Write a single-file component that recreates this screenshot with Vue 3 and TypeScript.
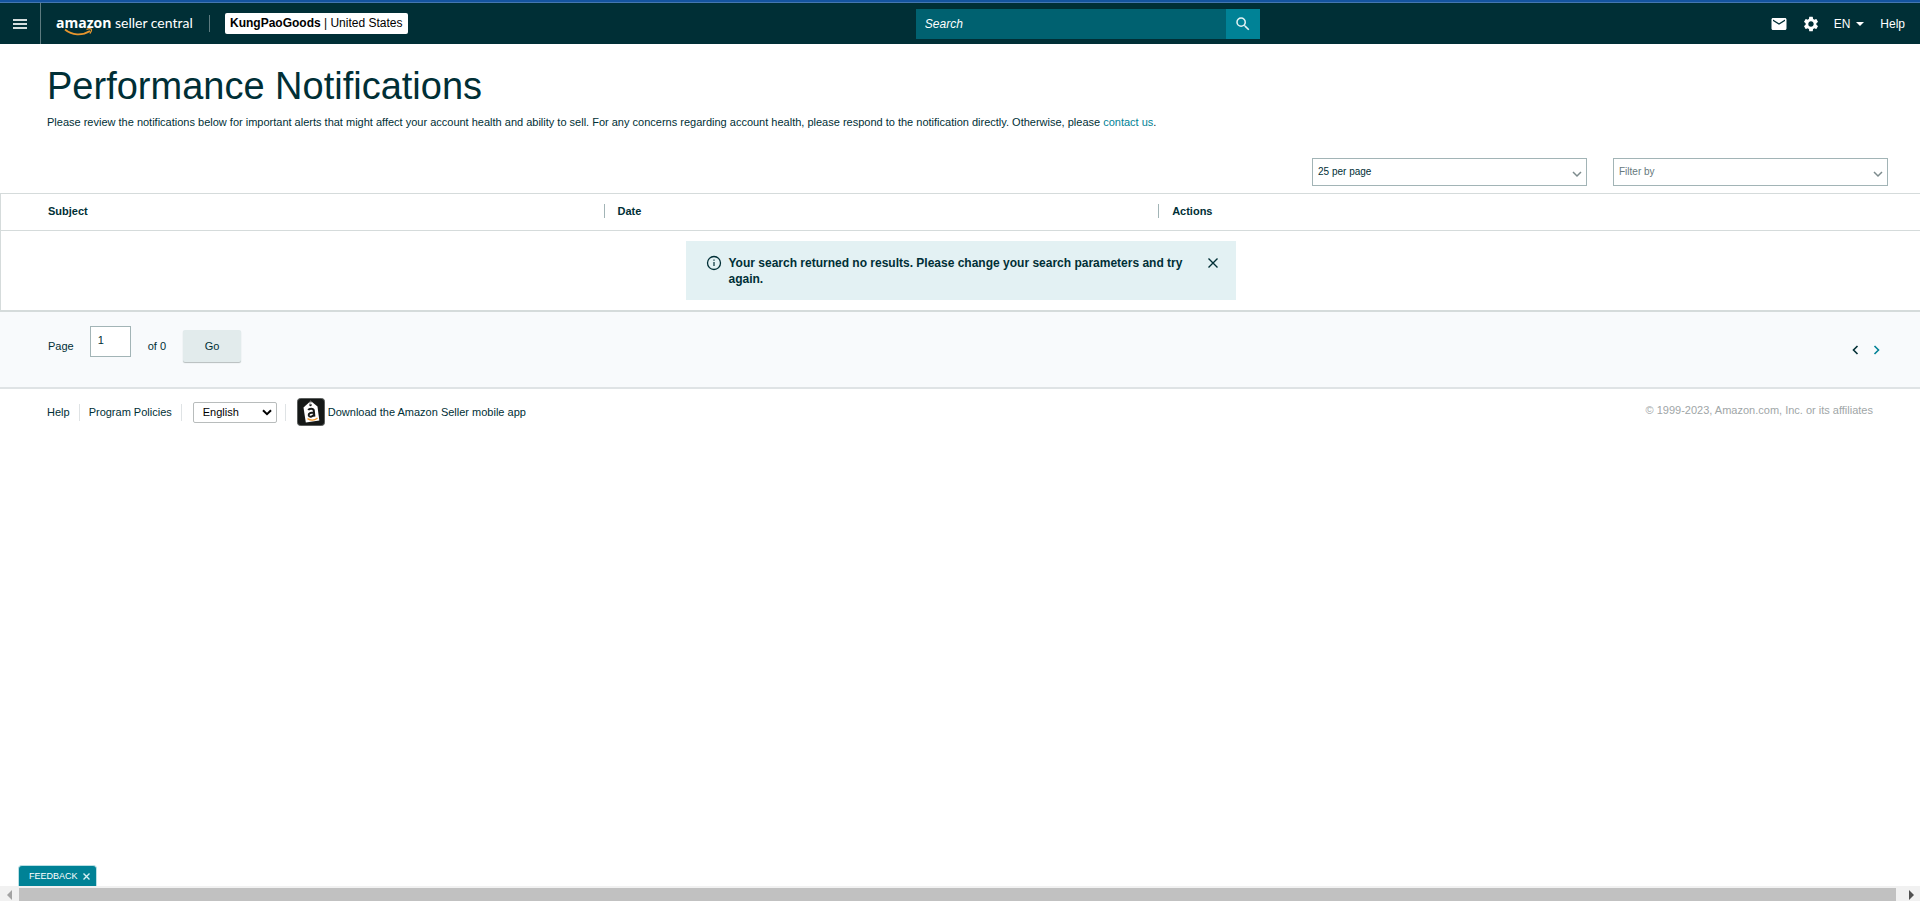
<script setup lang="ts">
import { ref } from 'vue'

const query = ref('')
const perPage = ref('25')
const filter = ref('')
const page = ref('1')
const language = ref('en')
const alertOpen = ref(true)
const feedbackOpen = ref(true)
const columns: string[] = ['Subject', 'Date', 'Actions']
</script>

<template>
  <div class="page">
    <header class="topbar">
      <div class="brand">
        <button class="menu" type="button" aria-label="Menu">
          <svg width="14" height="10" viewBox="0 0 14 10"><path d="M0 1h14M0 5h14M0 9h14" stroke="#d5dede" stroke-width="2" /></svg>
        </button>
        <a class="logo" href="#" aria-label="amazon seller central">
          <span class="logo-text"><b>amazon</b> <span>seller central</span></span>
          <svg class="smile" width="30" height="8" viewBox="0 0 30 8" fill="none" stroke="#e8962e">
            <path d="M1 1.5C8 7.5 18 8 26 3" stroke-width="1.8" />
            <path d="M22.5 1.5c2-.9 4-.9 4.8-.3.5.9-.2 2.800-1.500 4.300" stroke-width="1.300" />
          </svg>
        </a>
        <span class="bar"></span>
        <button class="account" type="button"><b>KungPaoGoods</b> | United States</button>
      </div>
      <form class="search" role="search" @submit.prevent>
        <input v-model="query" type="text" placeholder="Search" aria-label="Search" />
        <button type="submit" aria-label="Submit search">
          <svg width="18" height="18" viewBox="0 0 24 24" fill="#e4f3f4"><path d="M15.500 14h-.79l-.28-.27A6.470 6.470 0 0 0 16 9.500 6.500 6.500 0 1 0 9.500 16c1.610 0 3.090-.59 4.230-1.570l.27.28v.79l5 4.990L20.490 19l-4.990-5zm-6 0C7.010 14 5 11.990 5 9.500S7.010 5 9.500 5 14 7.010 14 9.500 11.990 14 9.500 14z" /></svg>
        </button>
      </form>
      <nav class="tools">
        <button type="button" aria-label="Messages">
          <svg width="18" height="18" viewBox="0 0 24 24" fill="#fff"><path d="M20 4H4c-1.100 0-1.990.9-1.990 2L2 18c0 1.100.9 2 2 2h16c1.100 0 2-.9 2-2V6c0-1.100-.9-2-2-2zm0 4l-8 5-8-5V6l8 5 8-5v2z" /></svg>
        </button>
        <button type="button" aria-label="Settings">
          <svg width="18" height="18" viewBox="0 0 24 24" fill="#fff"><path d="M19.140 12.940c.04-.3.060-.61.060-.94 0-.32-.02-.64-.07-.94l2.030-1.580a.49.49 0 0 0 .12-.61l-1.920-3.320a.488.488 0 0 0-.59-.22l-2.390.96c-.5-.38-1.030-.7-1.620-.94l-.36-2.540A.484.484 0 0 0 13.920 2.400h-3.840c-.24 0-.43.170-.47.410l-.36 2.540c-.59.240-1.130.57-1.620.94l-2.390-.96a.49.49 0 0 0-.59.220L2.740 8.870a.48.48 0 0 0 .12.610l2.030 1.580c-.05.3-.09.630-.09.940s.02.640.07.940l-2.030 1.580a.49.49 0 0 0-.12.610l1.920 3.320c.12.220.37.290.59.220l2.390-.96c.5.380 1.030.7 1.620.940l.36 2.540c.05.240.24.410.48.410h3.840c.24 0 .44-.170.47-.410l.36-2.540c.59-.240 1.130-.56 1.620-.940l2.390.960c.22.080.47 0 .59-.220l1.920-3.320a.48.48 0 0 0-.12-.610l-2.010-1.580zM12 15.600A3.610 3.610 0 0 1 8.400 12c0-1.980 1.620-3.600 3.600-3.600s3.600 1.620 3.600 3.600-1.620 3.600-3.600 3.600z" /></svg>
        </button>
        <button type="button" class="lang">EN <svg width="8" height="4" viewBox="0 0 8 4"><path d="M0 0h8L4 4z" fill="#fff" /></svg></button>
        <a href="#">Help</a>
      </nav>
    </header>

    <main>
      <section class="intro">
        <h1>Performance Notifications</h1>
        <p>Please review the notifications below for important alerts that might affect your account health and ability to sell. For any concerns regarding account health, please respond to the notification directly. Otherwise, please <a href="#">contact us</a>.</p>
      </section>

      <div class="filters">
        <div class="picker">
          <select v-model="perPage" aria-label="Results per page"><option value="25">25 per page</option></select>
          <svg width="10" height="7" viewBox="0 0 10 7"><path d="M1 1l4 4 4-4" /></svg>
        </div>
        <div class="picker muted">
          <select v-model="filter" aria-label="Filter by"><option value="">Filter by</option></select>
          <svg width="10" height="7" viewBox="0 0 10 7"><path d="M1 1l4 4 4-4" /></svg>
        </div>
      </div>

      <table class="results">
        <thead>
          <tr><th v-for="c in columns" :key="c" scope="col"><span>{{ c }}</span></th></tr>
        </thead>
        <tbody>
          <tr>
            <td colspan="3">
              <div v-if="alertOpen" class="alert" role="status">
                <svg width="16" height="16" viewBox="0 0 16 16" fill="none" stroke="#002f36"><circle cx="8" cy="8" r="6.500" stroke-width="1.300" /><path d="M8 7v4M8 4.500v1.200" stroke-width="1.200" /></svg>
                <p>Your search returned no results. Please change your search parameters and try again.</p>
                <button type="button" aria-label="Dismiss" @click="alertOpen = false">
                  <svg width="10" height="10" viewBox="0 0 10 10"><path d="M.5.5l9 9M9.500.5l-9 9" stroke="#002f36" stroke-width="1.400" /></svg>
                </button>
              </div>
            </td>
          </tr>
        </tbody>
      </table>

      <div class="pagination">
        <label for="page-number">Page</label>
        <input id="page-number" v-model="page" type="text" />
        <span class="total">of 0</span>
        <button class="go" type="button">Go</button>
        <div class="arrows">
          <button type="button" aria-label="Previous page"><svg width="7" height="10" viewBox="0 0 7 10"><path d="M5.500 1l-4 4 4 4" stroke="#002f36" /></svg></button>
          <button type="button" aria-label="Next page"><svg width="7" height="10" viewBox="0 0 7 10"><path d="M1.500 1l4 4-4 4" stroke="#008296" /></svg></button>
        </div>
      </div>
    </main>

    <footer class="footer">
      <a href="#">Help</a>
      <span class="sep"></span>
      <a href="#">Program Policies</a>
      <span class="sep"></span>
      <div class="language">
        <select v-model="language" aria-label="Language"><option value="en">English</option></select>
        <svg width="10" height="7" viewBox="0 0 10 7"><path d="M1 1.200l4 4 4-4" /></svg>
      </div>
      <span class="sep"></span>
      <a class="app" href="#">
        <svg width="28" height="28" viewBox="0 0 28 28">
          <rect x=".5" y=".5" width="27" height="27" rx="3" fill="#151817" stroke="#5b5e5d" />
          <path d="M6.500 9.500L12 4.500l3-.5 5.500 4.500 1.800 14L8.800 24.500z" fill="#fff" />
          <circle cx="13.500" cy="7" r="1.200" fill="#151817" />
          <path d="M13.400 7C11.500 3.500 14 1.500 15 5" fill="none" stroke="#aaa" stroke-width=".8" />
          <path d="M11.300 12.200c.8-2 5.200-2.300 5.500.4l.6 6M17 14.500c-3.500 0-5.500.8-5.300 2.700.3 2.200 4 1.900 5.400-.6" fill="none" stroke="#151817" stroke-width="2" />
          <path d="M10.500 20.700c3.500 2 7.500 1.500 10-.8" fill="none" stroke="#f29a2e" stroke-width="1.400" />
        </svg>
        <span>Download the Amazon Seller mobile app</span>
      </a>
      <small>© 1999-2023, Amazon.com, Inc. or its affiliates</small>
    </footer>

    <div class="bottom">
      <div v-if="feedbackOpen" class="feedback">
        <button type="button">FEEDBACK</button>
        <button type="button" aria-label="Close feedback" @click="feedbackOpen = false">
          <svg width="7" height="7" viewBox="0 0 7 7"><path d="M.5.5l6 6M6.500.5l-6 6" stroke="#d8f1f4" stroke-width="1.400" /></svg>
        </button>
      </div>
      <div class="scrollbar">
        <svg width="5" height="10" viewBox="0 0 5 10"><path d="M5 0v10L0 5z" fill="#a3a3a3" /></svg>
        <div class="thumb"></div>
        <svg width="5" height="10" viewBox="0 0 5 10"><path d="M0 0v10l5-5z" fill="#505050" /></svg>
      </div>
    </div>
  </div>
</template>

<style>
body { background: #fff; }
</style>

<style scoped>
.page {
  display: flex;
  flex-direction: column;
  min-height: 100vh;
  font-family: "Liberation Sans", Arial, sans-serif;
  font-size: 11px;
  line-height: 16px;
  color: #002f36;
}
* { box-sizing: border-box; }
button, input, select { font: inherit; color: inherit; margin: 0; }
button { padding: 0; border: 0; background: none; cursor: pointer; }
a { color: inherit; text-decoration: none; }
svg { display: block; flex: none; }

.topbar {
  display: flex;
  height: 44px;
  border-top: 2px solid #14549f;
  background: #002f36;
  box-shadow: inset 0 1px #4477b0;
  color: #fff;
}
.brand { display: flex; align-items: center; width: 47.7%; }
.menu {
  display: flex;
  align-items: center;
  justify-content: center;
  width: 41px;
  height: 41px;
  margin-top: 1px;
  border-right: 1px solid #5d7b80;
}
.logo { position: relative; margin-left: 15px; width: 138px; }
.logo-text {
  display: block;
  font-family: Lato, sans-serif;
  font-size: 14px;
  white-space: nowrap;
  line-height: 20px;
}
.logo-text b { font-family: "Open Sans", sans-serif; }
.smile { position: absolute; left: 8px; top: 15px; }
.bar { width: 1px; height: 17px; margin: 0 15px; background: #5d7b80; }
.account {
  height: 21px;
  padding: 0 5px;
  border-radius: 2px;
  background: #fff;
  color: #000;
  font-size: 12px;
  white-space: nowrap;
}
.search { display: flex; width: 344px; height: 30px; margin-top: 7px; }
.search input {
  flex: 1;
  min-width: 0;
  padding: 0 9px;
  border: 0;
  border-radius: 0;
  background: #006170;
  font-size: 12px;
  font-style: italic;
}
.search input::placeholder { color: #fff; opacity: 1; }
.search button {
  display: flex;
  align-items: center;
  justify-content: center;
  width: 34px;
  background: #008296;
}
.tools {
  display: flex;
  flex: 1;
  align-items: center;
  justify-content: flex-end;
  gap: 14px;
  padding: 1px 15px 0 0;
  font-size: 12px;
}
.lang { display: flex; align-items: center; gap: 6px; margin-right: 2px; }

.intro { padding: 16px 47px 0; }
h1 { margin: 0; font-size: 38px; font-weight: 400; line-height: 52px; }
.intro p { margin: 2px 0 0; }
.intro p a { color: #008296; }

.filters { display: flex; justify-content: flex-end; gap: 26px; padding: 28px 32px 0; }
.picker, .language { display: grid; align-items: center; }
.picker { width: 275px; }
.picker select, .picker svg, .language select, .language svg { grid-area: 1 / 1; }
.picker svg, .language svg { justify-self: end; pointer-events: none; fill: none; }
.picker select {
  width: 100%;
  height: 28px;
  padding: 0 5px 1px;
  appearance: none;
  border: 1px solid #a2b4b6;
  border-radius: 0;
  background: #fff;
  font-size: 10px;
}
.picker svg { margin: 4px 5px 0 0; stroke: #7d8b8d; stroke-width: 1.500; }
.muted select { color: #66797c; }

.results {
  width: 100%;
  margin-top: 7px;
  border-collapse: separate;
  border-spacing: 0;
  table-layout: fixed;
  border: 1px solid #d5dbdb;
  border-right: 0;
  border-bottom-width: 2px;
}
th { height: 37px; padding: 0; text-align: left; border-bottom: 1px solid #d5dbdb; }
th:first-child { width: 31.4%; padding-left: 47px; }
th:nth-child(2) { width: 28.9%; }
th span { display: block; line-height: 14px; margin-bottom: 2px; }
th + th span { padding-left: 13px; border-left: 1px solid #a2b4b6; }
td { padding: 10px 0; }
.alert {
  display: flex;
  align-items: flex-start;
  width: 550px;
  min-height: 59px;
  margin: 0 auto;
  padding: 14px 18px 13px 20px;
  background: #e3f1f3;
}
.alert p { flex: 1; margin: 0 20px 0 7px; font-size: 12px; font-weight: 700; }
.alert button { margin-top: 3px; }

.pagination {
  display: flex;
  align-items: center;
  height: 77px;
  padding: 0 40px 8px 48px;
  border-bottom: 2px solid #dfe3e5;
  background: #f8fafc;
}
.pagination input {
  width: 41px;
  height: 31px;
  margin: 0 17px 8px 16px;
  padding: 0 7px 3px;
  border: 1px solid #a2b4b6;
  border-radius: 0;
  background: #fff;
}
.go {
  width: 58px;
  height: 32px;
  margin-left: 17px;
  border-radius: 2px;
  background: #e2ebec;
  box-shadow: 0 1px 1px #b5bcbd;
}
.arrows { display: flex; gap: 14px; margin: 8px 0 0 auto; }
.arrows svg { fill: none; stroke-width: 1.600; }

.footer { display: flex; align-items: center; height: 46px; padding: 0 47px; }
.sep { width: 1px; height: 17px; margin: 0 9px; background: #dfe3e5; }
.language { width: 84px; margin: 0 -1px 0 2px; }
.language select {
  width: 100%;
  height: 21px;
  padding: 0 9px;
  appearance: none;
  border: 1px solid #b8bcbc;
  border-radius: 2px;
  background: #fff;
  color: #000;
}
.language svg { margin-right: 5px; stroke: #000; stroke-width: 2; }
.app { display: flex; align-items: center; gap: 3px; margin-left: 2px; }
.footer small { margin: 0 0 4px auto; font-size: 11px; color: #a0a6a7; }

.bottom { margin-top: auto; }
.feedback {
  display: flex;
  align-items: center;
  gap: 5px;
  width: 79px;
  height: 21px;
  margin-left: 18px;
  padding: 0 4px 0 10px;
  border: 1px solid #b9dfe4;
  border-bottom: 0;
  border-radius: 4px 4px 0 0;
  background: #008296;
  color: #fff;
  font-size: 9px;
}
.scrollbar { display: flex; align-items: center; gap: 7px; height: 15px; padding: 2px 6px 0 7px; background: #f1f1f1; }
.thumb { flex: 1; height: 13px; margin-right: 6px; background: #c1c1c1; }
</style>
